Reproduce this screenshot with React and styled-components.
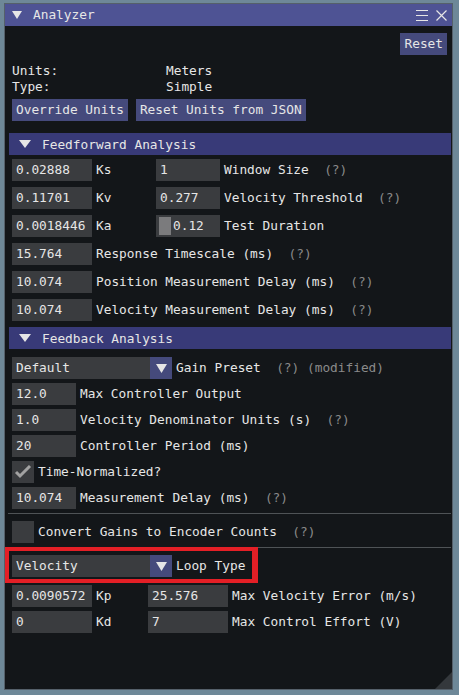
import React from "react";
import styled, { createGlobalStyle } from "styled-components";

const GlobalStyle = createGlobalStyle`
  html, body {
    margin: 0;
    padding: 0;
    background: #6e8898;
  }
  body {
    width: 459px;
    height: 695px;
    overflow: hidden;
    font-family: "DejaVu Sans Mono", "Liberation Mono", monospace;
    font-size: 12.8px;
    color: #e6e6e6;
  }
  #root {
    padding: 3px 0 0 4px;
  }
`;

const Window = styled.div`
  position: relative;
  width: 449px;
  height: 687px;
  box-sizing: border-box;
  background: #131619;
  border: 1px solid #55606a;
  display: flex;
  flex-direction: column;
`;

const TitleBar = styled.div`
  height: 22px;
  flex-shrink: 0;
  display: flex;
  align-items: center;
  padding: 0 5px 0 7px;
  background: #4e5394;
  gap: 11px;
  .title {
    flex: 1;
    line-height: 22px;
  }
  .tools {
    display: flex;
    align-items: center;
    gap: 8px;
  }
`;

const Body = styled.div`
  display: flex;
  flex-direction: column;
  padding: 7px 5px 0 7px;
`;

const Block = styled.div`
  display: flex;
  flex-direction: column;
  gap: ${(p) => p.$gap || 0}px;
  margin-top: ${(p) => p.$mt || 0}px;
`;

const TopRow = styled.div`
  display: flex;
  justify-content: flex-end;
`;

const Button = styled.button`
  height: 22px;
  padding: 0 4px;
  border: none;
  background: #454a7c;
  color: #e6e6e6;
  font: inherit;
  line-height: 22px;
  white-space: pre;
`;

const ButtonRow = styled.div`
  display: flex;
  gap: 8px;
  margin-top: ${(p) => p.$mt || 0}px;
`;

const InfoGrid = styled.div`
  display: grid;
  grid-template-columns: 154px auto;
  line-height: 16px;
  margin-top: ${(p) => p.$mt || 0}px;
`;

const Header = styled.div`
  height: 22px;
  display: flex;
  align-items: center;
  gap: 11px;
  margin: ${(p) => p.$mt || 0}px -4px 0 -3px;
  padding-left: 10px;
  background: #383a78;
`;

const Row = styled.div`
  display: flex;
  align-items: center;
  height: 22px;
  white-space: pre;
`;

const Input = styled.div`
  width: ${(p) => p.$w || 80}px;
  height: 22px;
  flex-shrink: 0;
  box-sizing: border-box;
  padding-left: 4px;
  background: #3a3c3f;
  line-height: 22px;
  display: flex;
  align-items: center;
  gap: 2px;
`;

const Grab = styled.span`
  width: 12px;
  height: 18px;
  margin-left: -1px;
  background: #7b7b7d;
`;

const Label = styled.span`
  width: ${(p) => (p.$w ? `${p.$w}px` : "auto")};
  flex-shrink: 0;
  margin-left: 4px;
  line-height: 22px;
`;

const Help = styled.span`
  color: #8a8a8a;
  margin-left: ${(p) => (p.$tight ? 1 : 2)}ch;
`;

const Combo = styled.div`
  width: 160px;
  height: 22px;
  display: flex;
  background: #3a3c3f;
  .value {
    flex: 1;
    padding-left: 4px;
    line-height: 22px;
  }
  .arrow {
    width: 22px;
    display: flex;
    align-items: center;
    justify-content: center;
    background: #454a7c;
  }
`;

const CheckBox = styled.div`
  width: 22px;
  height: 22px;
  flex-shrink: 0;
  background: #3a3c3f;
  display: flex;
  align-items: center;
  justify-content: center;
`;

const Separator = styled.div`
  height: 1px;
  margin: ${(p) => p.$mt || 0}px -4px 0 -4px;
  background: #4f5356;
`;

const Highlight = styled.div`
  position: relative;
  align-self: flex-start;
  margin-top: ${(p) => p.$mt || 0}px;
  &::after {
    content: "";
    position: absolute;
    left: -7px;
    right: -13px;
    top: -8px;
    bottom: -6px;
    border: 4px solid #e41f26;
    border-right-width: 6px;
    pointer-events: none;
  }
`;

const Grip = styled.svg`
  position: absolute;
  right: 0;
  bottom: 0;
`;

const Triangle = ({ w = 11, h = 8, color = "#e6e6e6" }) => (
  <svg width={w} height={h} viewBox={`0 0 ${w} ${h}`}>
    <polygon points={`0,0 ${w},0 ${w / 2},${h}`} fill={color} />
  </svg>
);

const Row4 = ({ value, label, w, help, grab }) => (
  <Row>
    <Input $w={w}>
      {grab && <Grab />}
      {value}
    </Input>
    <Label>
      {label}
      {help && <Help>(?)</Help>}
    </Label>
  </Row>
);

const PairRow = ({ a, la, lw, b, bw, lb, help, grab }) => (
  <Row>
    <Input>{a}</Input>
    <Label $w={lw}>{la}</Label>
    <Input $w={bw}>
      {grab && <Grab />}
      {b}
    </Input>
    <Label>
      {lb}
      {help && <Help>(?)</Help>}
    </Label>
  </Row>
);

const ComboRow = ({ value, label, children }) => (
  <Row>
    <Combo>
      <span className="value">{value}</span>
      <span className="arrow">
        <Triangle w={11} h={9} />
      </span>
    </Combo>
    <Label>
      {label}
      {children}
    </Label>
  </Row>
);

const CheckRow = ({ checked, label, help }) => (
  <Row>
    <CheckBox>
      {checked && (
        <svg width="18" height="14" viewBox="0 0 18 14">
          <polyline points="2,7 6,11 16,1" fill="none" stroke="#a2a2a2" strokeWidth="3" />
        </svg>
      )}
    </CheckBox>
    <Label>
      {label}
      {help && <Help>(?)</Help>}
    </Label>
  </Row>
);

export default function App() {
  return (
    <>
      <GlobalStyle />
      <Window>
        <TitleBar>
          <Triangle w={10} h={8} />
          <span className="title">Analyzer</span>
          <span className="tools">
            <svg width="12" height="12" viewBox="0 0 12 12">
              <path d="M0 1.5H12M0 6.5H12M0 11.5H12" stroke="#e6e6e6" strokeWidth="1" />
            </svg>
            <svg width="11" height="11" viewBox="0 0 11 11">
              <path d="M0.5 0.5L10.5 10.5M10.5 0.5L0.5 10.5" stroke="#e6e6e6" strokeWidth="1.2" />
            </svg>
          </span>
        </TitleBar>
        <Body>
          <TopRow>
            <Button>Reset</Button>
          </TopRow>
          <InfoGrid $mt={8}>
            <span>Units:</span>
            <span>Meters</span>
            <span>Type:</span>
            <span>Simple</span>
          </InfoGrid>
          <ButtonRow $mt={4}>
            <Button>Override Units</Button>
            <Button>Reset Units from JSON</Button>
          </ButtonRow>

          <Header $mt={12}>
            <Triangle w={12} h={8} />
            <span>Feedforward Analysis</span>
          </Header>
          <Block $mt={4} $gap={6}>
            <PairRow a="0.02888" la="Ks" lw={60} b="1" bw={64} lb="Window Size" help />
            <PairRow a="0.11701" la="Kv" lw={60} b="0.277" bw={64} lb="Velocity Threshold" help />
            <PairRow a="0.0018446" la="Ka" lw={60} b="0.12" bw={64} lb="Test Duration" grab />
            <Row4 value="15.764" label="Response Timescale (ms)" help />
            <Row4 value="10.074" label="Position Measurement Delay (ms)" help />
            <Row4 value="10.074" label="Velocity Measurement Delay (ms)" help />
          </Block>

          <Header $mt={6}>
            <Triangle w={12} h={8} />
            <span>Feedback Analysis</span>
          </Header>
          <Block $mt={8} $gap={4}>
            <ComboRow value="Default" label="Gain Preset">
              <Help>(?)</Help>
              <Help $tight>(modified)</Help>
            </ComboRow>
            <Row4 w={64} value="12.0" label="Max Controller Output" />
            <Row4 w={64} value="1.0" label="Velocity Denominator Units (s)" help />
            <Row4 w={64} value="20" label="Controller Period (ms)" />
            <CheckRow checked label="Time-Normalized?" />
            <Row4 w={64} value="10.074" label="Measurement Delay (ms)" help />
          </Block>
          <Separator $mt={4} />
          <Block $mt={7}>
            <CheckRow label="Convert Gains to Encoder Counts" help />
          </Block>
          <Separator $mt={4} />
          <Highlight $mt={7}>
            <ComboRow value="Velocity" label="Loop Type" />
          </Highlight>
          <Block $mt={8} $gap={4}>
            <PairRow a="0.0090572" la="Kp" lw={52} b="25.576" bw={80} lb="Max Velocity Error (m/s)" />
            <PairRow a="0" la="Kd" lw={52} b="7" bw={80} lb="Max Control Effort (V)" />
          </Block>
        </Body>
        <Grip width="17" height="17" viewBox="0 0 17 17">
          <polygon points="17,0 17,17 0,17" fill="#34383c" />
        </Grip>
      </Window>
    </>
  );
}
